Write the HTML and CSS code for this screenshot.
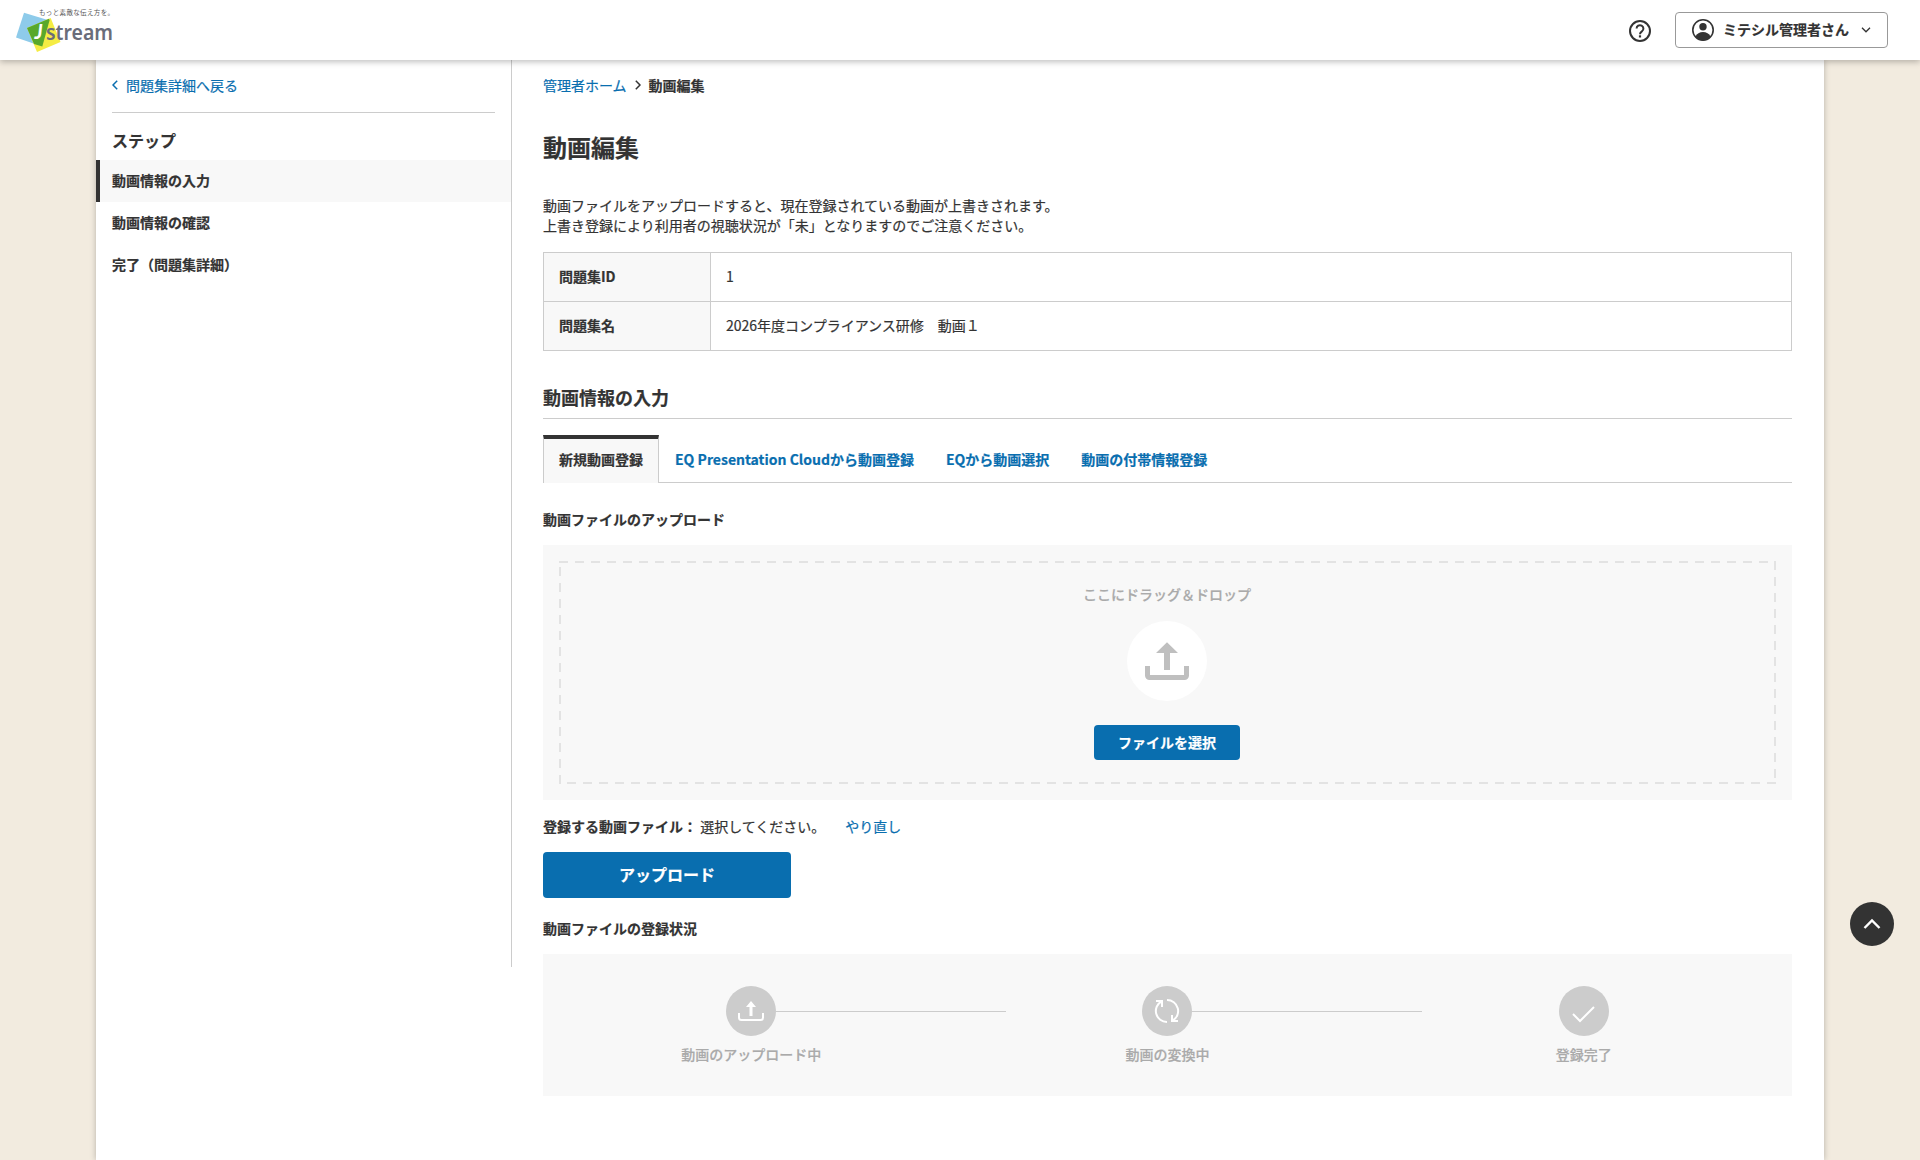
FILE: index.html
```html
<!DOCTYPE html>
<html lang="ja">
<head>
  <meta charset="UTF-8" />
  <meta name="viewport" content="width=device-width, initial-scale=1.0" />
  <title>動画編集</title>
  <link rel="stylesheet" href="styles.css">
</head>

<body>

  <!-- ========== HEADER ========== -->
  <header class="header">
    <a class="logo" href="#">
      <svg width="104" height="52" viewBox="0 0 104 52">
        <polygon points="8,4.700 33.500,12.500 26.300,38.500 0,29.500" fill="#8ecbea"/>
        <polygon points="11,20 34.700,10 44.500,34 21,44" fill="#f5ec43"/>
        <polygon points="11,20 33,10.800 33.500,12.500 26.300,38.500 18,36" fill="#58a82c"/>
        <text x="23" y="6.500" class="logo-catch" textLength="75">もっと素敵な伝え方を。</text>
        <text x="18.500" y="31" class="logo-j">J</text>
        <text x="30" y="32" class="logo-name" textLength="67" lengthAdjust="spacingAndGlyphs">stream</text>
      </svg>
    </a>
    <div class="header-menu">
      <a class="help" href="#">
        <svg width="22" height="22" viewBox="0 0 22 22" fill="none" stroke="#333" stroke-width="2">
          <circle cx="11" cy="11" r="10"/>
          <path d="M7.600 8.600a3.400 3.400 0 1 1 5.300 2.800c-1.300.9-1.900 1.400-1.900 2.800"/>
          <path d="M11 15.300v2.200" stroke-width="2.200"/>
        </svg>
      </a>
      <button class="user-btn">
        <svg width="22" height="22" viewBox="0 0 22 22">
          <circle cx="11" cy="11" r="10.200" fill="#fff" stroke="#333" stroke-width="1.600"/>
          <circle cx="11" cy="7.700" r="3.700" fill="#333"/>
          <path d="M3.500 17.500c1.300-3 4.200-4.600 7.500-4.600s6.200 1.600 7.500 4.600c-1.800 2.400-4.500 3.900-7.500 3.900s-5.700-1.500-7.500-3.900z" fill="#333"/>
        </svg>
        <span>ミテシル管理者さん</span>
        <svg class="user-arrow" width="10" height="6" viewBox="0 0 10 6" fill="none" stroke="#333" stroke-width="1.300"><path d="M1 .8l4 4 4-4"/></svg>
      </button>
    </div>
  </header>

  <div class="container">
    <!-- ========== SIDEBAR ========== -->
    <aside class="sidebar">
      <a class="back" href="#">
        <svg width="6" height="10" viewBox="0 0 6 10" fill="none" stroke="#096eaf" stroke-width="1.500"><path d="M5.200.8L1 5l4.200 4.200"/></svg>
        問題集詳細へ戻る
      </a>
      <h2 class="step-title">ステップ</h2>
      <ul class="step-list">
        <li class="current">動画情報の入力</li>
        <li>動画情報の確認</li>
        <li>完了（問題集詳細）</li>
      </ul>
    </aside>

    <!-- ========== MAIN ========== -->
    <main class="main">
      <nav class="breadcrumb">
        <a href="#">管理者ホーム</a>
        <svg width="6" height="10" viewBox="0 0 6 10" fill="none" stroke="#333" stroke-width="1.500"><path d="M.8.8L5 5 .8 9.200"/></svg>
        <span>動画編集</span>
      </nav>
      <h1>動画編集</h1>
      <p class="lead">動画ファイルをアップロードすると、現在登録されている動画が上書きされます。<br>上書き登録により利用者の視聴状況が「未」となりますのでご注意ください。</p>

      <table class="info">
        <tr><th>問題集ID</th><td>1</td></tr>
        <tr><th>問題集名</th><td>2026年度コンプライアンス研修　動画１</td></tr>
      </table>

      <h2 class="section-title">動画情報の入力</h2>
      <ul class="tabs">
        <li class="active">新規動画登録</li>
        <li><a href="#">EQ Presentation Cloudから動画登録</a></li>
        <li><a href="#">EQから動画選択</a></li>
        <li><a href="#">動画の付帯情報登録</a></li>
      </ul>

      <h3>動画ファイルのアップロード</h3>
      <div class="drop-wrap">
        <div class="drop-area">
          <p>ここにドラッグ＆ドロップ</p>
          <svg class="drop-icon" width="80" height="80" viewBox="0 0 80 80">
            <circle cx="40" cy="40" r="40" fill="#fff"/>
            <path d="M40 21.300L51 32H43v17h-6V32h-8z" fill="#bfbfbf"/>
            <path d="M20.500 45v9.500a2 2 0 0 0 2 2h35a2 2 0 0 0 2-2V45" fill="none" stroke="#bfbfbf" stroke-width="5"/>
          </svg>
          <button class="btn btn-select">ファイルを選択</button>
        </div>
      </div>

      <p class="file-name"><b>登録する動画ファイル：</b> 選択してください。<a href="#">やり直し</a></p>
      <button class="btn btn-upload">アップロード</button>

      <h3 class="status-title">動画ファイルの登録状況</h3>
      <ol class="status">
        <li>
          <svg width="50" height="50" viewBox="0 0 50 50">
            <circle cx="25" cy="25" r="25" fill="#ccc"/>
            <path d="M25 15l5 6h-3.500v9h-3v-9H20z" fill="#fff"/>
            <path d="M13 27v4.500a2.500 2.500 0 0 0 2.500 2.500h19a2.500 2.500 0 0 0 2.500-2.500V27" fill="none" stroke="#fff" stroke-width="2"/>
          </svg>
          <span>動画のアップロード中</span>
        </li>
        <li>
          <svg width="50" height="50" viewBox="0 0 50 50">
            <circle cx="25" cy="25" r="25" fill="#ccc"/>
            <g fill="none" stroke="#fff" stroke-width="2">
              <path d="M25 36a11 11 0 0 1-5.500-20.600M14 15h6v6"/>
              <path d="M25 14a11 11 0 0 1 5.500 20.600M36 35h-6v-6"/>
            </g>
          </svg>
          <span>動画の変換中</span>
        </li>
        <li>
          <svg width="50" height="50" viewBox="0 0 50 50">
            <circle cx="25" cy="25" r="25" fill="#ccc"/>
            <path d="M14 28l7 7 14-14" fill="none" stroke="#fff" stroke-width="2"/>
          </svg>
          <span>登録完了</span>
        </li>
      </ol>
    </main>
  </div>

  <a class="page-top" href="#">
    <svg width="18" height="12" viewBox="0 0 18 12" fill="none" stroke="#fff" stroke-width="2.400"><path d="M1.500 10L9 2.500l7.500 7.500"/></svg>
  </a>

</body>
</html>
```
FILE: styles.css
```css
* { box-sizing: border-box; margin: 0; padding: 0; }
body {
  font-family: "Noto Sans CJK JP", "Noto Sans", sans-serif;
  font-size: 14px;
  line-height: 20px;
  color: #333;
  background: #f2ebdf;
  height: 1160px;
  overflow: hidden;
  -webkit-text-stroke: .2px;
}
a { color: #096eaf; text-decoration: none; }
ul, ol { list-style: none; }
svg { display: block; }
button { font-family: inherit; font-size: 14px; font-weight: bold; color: #333; cursor: pointer; }

/* ---------- HEADER ---------- */
.header {
  position: relative;
  z-index: 10;
  display: flex;
  justify-content: space-between;
  height: 60px;
  padding: 8px 32px 0 16px;
  background: #fff;
  box-shadow: 0 2px 6px rgba(0, 0, 0, .25);
}
.logo { -webkit-text-stroke: 0; }
.logo svg { overflow: visible; }
.logo-catch { font-size: 6.5px; fill: #555; }
.logo-j { font-family: Lato, sans-serif; font-size: 20px; font-weight: 700; font-style: italic; fill: #fff; }
.logo-name { font-family: "Noto Sans", sans-serif; font-size: 22px; font-weight: 600; fill: #6a6d7a; }
.header-menu { display: flex; align-items: flex-start; gap: 24px; padding-top: 4px; }
.help { padding-top: 8px; }
.user-btn {
  display: flex;
  align-items: center;
  width: 213px;
  height: 36px;
  padding: 0 16px;
  background: #fff;
  border: 1px solid #999;
  border-radius: 4px;
}
.user-btn span { margin-left: 9px; padding-bottom: 2px; }
.user-arrow { margin-left: auto; }

/* ---------- LAYOUT ---------- */
.container {
  display: flex;
  align-items: flex-start;
  width: 90%;
  height: 1100px;
  margin: 0 auto;
  background: #fff;
  box-shadow: 0 0 6px rgba(0, 0, 0, .25);
}
.sidebar { width: 416px; height: 907px; border-right: 1px solid #ccc; }
.main { flex: 1; padding: 15px 32px 0 31px; }

/* ---------- SIDEBAR ---------- */
.back {
  display: flex;
  align-items: center;
  gap: 8px;
  height: 53px;
  margin: 0 16px;
  padding-bottom: 2px;
  border-bottom: 1px solid #ccc;
}
.step-title { padding: 17px 16px 10px; font-size: 16px; line-height: 20px; }
.step-list li { height: 42px; padding: 0 16px; line-height: 40px; font-weight: bold; }
.step-list .current { padding-left: 12px; background: #f8f8f8; border-left: 4px solid #333; }

/* ---------- MAIN ---------- */
.breadcrumb { display: flex; align-items: center; gap: 8px; }
.breadcrumb span { font-weight: bold; }
h1 { margin-top: 34px; font-size: 24px; line-height: 36px; }
.lead { margin-top: 30px; }

.info { width: 100%; margin-top: 17px; border-collapse: collapse; }
.info th, .info td { height: 49px; padding: 0 15px 2px; text-align: left; border: 1px solid #ccc; }
.info th { width: 167px; background: #f8f8f8; }

.section-title { margin-top: 30px; padding-bottom: 5px; font-size: 18px; line-height: 32px; border-bottom: 1px solid #ccc; }

/* ---------- TABS ---------- */
.tabs { display: flex; margin-top: 16px; height: 48px; font-weight: bold; box-shadow: inset 0 -1px #ccc; }
.tabs li { padding: 14px 16px 0; }
.tabs .active { padding: 10px 15px 0; background: #f8f8f8; border: solid #ccc; border-width: 4px 1px 0; border-top-color: #333; }

h3 { margin-top: 26px; font-size: 14px; line-height: 20px; }

/* ---------- DROP AREA ---------- */
.drop-wrap { height: 255px; margin-top: 16px; padding: 16px; background: #f8f8f8; }
.drop-area {
  display: flex;
  flex-direction: column;
  align-items: center;
  height: 223px;
  padding: 23px 1px 0 0;
  /* dashes: 9px on, 7px off, running clockwise */
  background:
    repeating-linear-gradient(90deg, #e3e3e3 0 9px, transparent 9px 16px) 0 0 / 100% 2px no-repeat,
    repeating-linear-gradient(180deg, #e3e3e3 0 9px, transparent 9px 16px) 100% 0 / 2px 100% no-repeat,
    repeating-linear-gradient(270deg, #e3e3e3 0 9px, transparent 9px 16px) 0 100% / 100% 2px no-repeat,
    repeating-linear-gradient(0deg, #e3e3e3 0 9px, transparent 9px 16px) 0 0 / 2px 100% no-repeat;
}
.drop-area p { color: #aaa; font-weight: 500; }
.drop-icon { margin-top: 17px; }

.btn { display: block; padding-bottom: 2px; color: #fff; background: #096eaf; border: none; border-radius: 4px; }
.btn-select { width: 146px; height: 35px; margin-top: 24px; }
.btn-upload { width: 248px; height: 46px; margin-top: 16px; font-size: 16px; }

.file-name { margin-top: 16px; }
.file-name a { margin-left: 20px; }

/* ---------- STATUS ---------- */
.status-title { margin-top: 20px; }
.status { display: grid; grid-template-columns: repeat(3, 1fr); height: 142px; margin-top: 16px; padding-top: 32px; color: #aaa; background: #f8f8f8; }
.status li { position: relative; display: flex; flex-direction: column; align-items: center; gap: 8px; font-weight: 500; }
.status li:not(:last-child)::after { content: ""; position: absolute; top: 25px; left: calc(50% + 25px); width: 230px; height: 1px; background: #ccc; }

/* ---------- PAGE TOP ---------- */
.page-top {
  position: fixed;
  right: 26px;
  bottom: 214px;
  display: flex;
  align-items: center;
  justify-content: center;
  width: 44px;
  height: 44px;
  background: #333;
  border-radius: 50%;
}
```
